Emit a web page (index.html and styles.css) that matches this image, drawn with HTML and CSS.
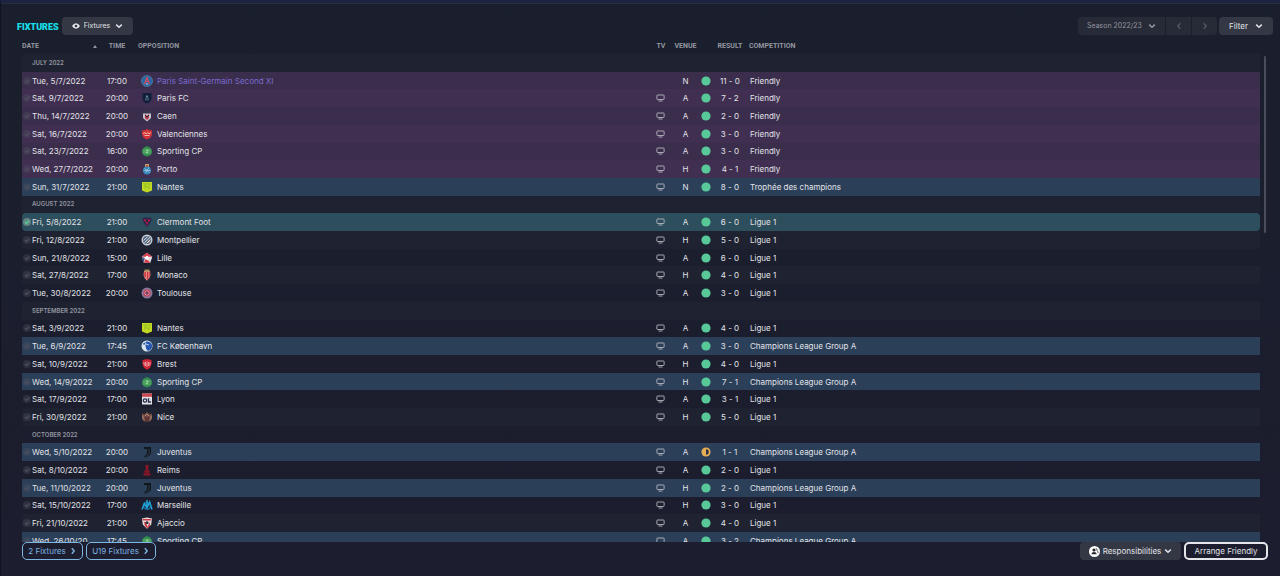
FILE: index.html
```html
<!DOCTYPE html>
<html lang="en">
<head>
    <meta charset="UTF-8">
    <title>Fixtures</title>
    <meta name="viewport" content="width=device-width, initial-scale=1.0">
    <link rel="stylesheet" href="styles.css">
</head>
<body>
    <!-- Icons and club crests -->
    <svg class="sprite" aria-hidden="true">
        <symbol id="chevron" viewBox="0 0 8 8"><path d="M1.2 2.6 4 5.2l2.8-2.6" fill="none" stroke="currentColor" stroke-width="1.5"/></symbol>
        <symbol id="left" viewBox="0 0 8 8"><path d="M5.2 1.2 2.8 4l2.4 2.8" fill="none" stroke="currentColor" stroke-width="1.4"/></symbol>
        <symbol id="right" viewBox="0 0 8 8"><path d="M2.8 1.2 5.2 4 2.8 6.8" fill="none" stroke="currentColor" stroke-width="1.4"/></symbol>
        <symbol id="eye" viewBox="0 0 8 8"><path d="M0 4Q1.6 1.2 4 1.2T8 4Q6.4 6.8 4 6.8T0 4z" fill="currentColor"/><circle cx="4" cy="4" r="1.3" fill="#343845"/></symbol>
        <symbol id="person" viewBox="0 0 11 11"><circle cx="5.5" cy="5.5" r="5.5" fill="#fff"/><circle cx="5" cy="4" r="1.6" fill="#25262f"/><path d="M2.3 8.2q.4-2.3 2.7-2.3t2.8 2.3z" fill="#25262f"/><path d="M6.8 2.5q1.7.1 1.3 2.1 1 .8 1 2.6" fill="none" stroke="#25262f" stroke-width=".8"/></symbol>
        <symbol id="check" viewBox="0 0 8 8"><circle cx="4" cy="4" r="4" fill="currentColor"/><path d="m2 4 1.5 1.5L6.2 2.7" fill="none" stroke="var(--tick)" stroke-width="1.1"/></symbol>
        <symbol id="tv" viewBox="0 0 9 8"><path d="M1.500 1h6q.6 0 .6.6v3.300q0 .6-.6.6h-6q-.6 0-.6-.6V1.600q0-.6.6-.6zM2.500 7h4" fill="none" stroke="currentColor" stroke-width=".9"/></symbol>
        <symbol id="win" viewBox="0 0 10 10"><circle cx="5" cy="5" r="4.600" fill="#58c898"/></symbol>
        <symbol id="draw" viewBox="0 0 10 10"><circle cx="5" cy="5" r="4.600" fill="#e5ae55"/><path d="M5 2.200a2.800 2.800 0 0 1 0 5.600z" fill="#2c3347"/></symbol>

        <symbol id="psg" viewBox="0 0 12 12"><circle cx="6" cy="6" r="5.500" fill="#2a68a0" stroke="#5c90b8" stroke-width=".6"/><path d="M6 2.200 3.600 9.200M6 2.200l2.400 7M4.200 6.500h3.600" stroke="#df4b61" stroke-width="1.100" fill="none"/><path d="M5 9h2" stroke="#d9dfec" stroke-width=".8"/></symbol>
        <symbol id="parisfc" viewBox="0 0 12 12"><path d="M1.500 1h9v5.500Q10 10 6 11.500 2 10 1.500 6.500z" fill="#10213d"/><path d="M4.500 3h3l.8 6H3.700zM6 5v4" fill="#6d86a4" stroke="#0b172d"/></symbol>
        <symbol id="caen" viewBox="0 0 12 12"><path d="M2 1h8v7l-4 3.500L2 8z" fill="#c9c2c9"/><path d="M2 1h8v2.500H2z" fill="#37364d"/><path d="m4 4 2 2 2-2v4L6 10 4 8z" fill="#b73448"/><path d="m4 5 2 2 2-2" fill="none" stroke="#29283a"/></symbol>
        <symbol id="valenciennes" viewBox="0 0 12 12"><path d="M1 2.500Q3.500 2.500 6 1q2.500 1.500 5 1.500V6q-.5 4-5 5.500Q1.500 10 1 6z" fill="#d53238"/><path d="m2 6 2-1.500L5 6l2-1.500L8 6l2-1.500M3.500 7.500h5" fill="none" stroke="#f1c4bb" stroke-width=".9"/></symbol>
        <symbol id="sporting" viewBox="0 0 12 12"><path d="M3 2.500 6 1l3 1.500L11 5v3l-2 2.500-3 1-3-1L1 8V5z" fill="#328c4d"/><path d="M3 3.500v6M9 3.500v6" stroke="#85b18b" stroke-width=".7"/><circle cx="6" cy="6.500" r="2.800" fill="#48a65a"/><path d="M4.800 5h2.500L5.200 7.800h2" fill="none" stroke="#bed7bd" stroke-width=".8"/></symbol>
        <symbol id="porto" viewBox="0 0 12 12"><path d="M4 1h4v3H4z" fill="#c3a46a"/><circle cx="6" cy="7.500" r="4" fill="#3185b9"/><path d="m3.500 5.500 5 4M8 4.500 4.500 10M2.500 7.500h7" stroke="#9fc7dc" stroke-width=".8"/><circle cx="6" cy="3" r="1" fill="#a53e45"/></symbol>
        <symbol id="nantes" viewBox="0 0 12 12"><path d="M1 1h10v8.500L6 11.500 1 9.500z" fill="#c3d821"/><path d="M4 8V4l4 4V4M2 3h8" fill="none" stroke="#8cbf28" stroke-width="1"/></symbol>
        <symbol id="clermont" viewBox="0 0 12 12"><path d="M1 2.500Q6 .5 11 2.500L8.500 8 6 11 3.500 8z" fill="#28254f"/><path d="M2 3.500h8L7 6.500 6 10 5 6.500z" fill="#b41f43"/><circle cx="6" cy="5" r="1.200" fill="#252345"/></symbol>
        <symbol id="montpellier" viewBox="0 0 12 12"><circle cx="6" cy="6" r="5.500" fill="#c7cdd4"/><circle cx="6" cy="6" r="4.100" fill="#536884"/><path d="m2.600 6.500 4.200-4M3.500 8.500 9 3.500M5.500 9.500l4-4" stroke="#dbe0e4" stroke-width="1"/><path d="m7 9 2-2" stroke="#c97655"/></symbol>
        <symbol id="lille" viewBox="0 0 12 12"><path d="m6 .8 5.300 4-2 6H2.700l-2-6z" fill="#e4dce3"/><path d="m6 .8 5.300 4H.7zM3 10.800 4.500 7 8 9l1.300 1.800z" fill="#d73a4a"/><path d="m.7 4.800 3 1.500-1 4.500z" fill="#374e80"/><path d="m4 5.500 2-2 2 2-1 2H5z" fill="#fff"/></symbol>
        <symbol id="monaco" viewBox="0 0 12 12"><path d="M3 2h6l.5 4Q9 9.500 6 11.700 3 9.500 2.500 6z" fill="#e08d89"/><path d="M3.500 3h1.300v6L3.200 7zM6 3h1.300v7L6 11zM8.300 3H9l.3 3.500-1 2z" fill="#cf3037"/><path d="M3.500.5h5L8.300 2.500H3.700z" fill="#a99157"/></symbol>
        <symbol id="toulouse" viewBox="0 0 12 12"><circle cx="6" cy="6" r="5.500" fill="#87799d"/><circle cx="6" cy="6" r="3.800" fill="#b93b55"/><path d="M6 2.500v7M2.500 6h7M3.700 3.700l4.600 4.600M8.300 3.700 3.700 8.300" stroke="#ddbdc8" stroke-width=".7"/><circle cx="6" cy="6" r="1.400" fill="#75405f"/></symbol>
        <symbol id="copenhagen" viewBox="0 0 12 12"><circle cx="6" cy="6" r="5.500" fill="#dce5ef"/><path d="M5 1.500q5-.5 6 3.500t-4 6Q4.500 9 4.500 6z" fill="#2757b0"/><path d="m1.500 4 3-2-1 3z" fill="#2757a0"/><path d="m5 4 3 1" stroke="#b7cee8"/></symbol>
        <symbol id="brest" viewBox="0 0 12 12"><path d="M1.500 2 6 1l4.500 1v4Q10 10 6 11.700 2 10 1.500 6z" fill="#d12335"/><path d="M3 4v2l1.500 2V4M6 3.500V9M9 4v2L7.500 8V4" fill="none" stroke="#f3b2b5" stroke-width=".8"/></symbol>
        <symbol id="lyon" viewBox="0 0 12 12"><path d="M1 .5h10v11H1z" fill="#e1e1e6"/><path d="M1 .5h10v3.300H1z" fill="#cb4850"/><circle cx="4" cy="7.500" r="1.700" fill="none" stroke="#29324c" stroke-width="1.300"/><path d="M7.500 5.200V9H10" fill="none" stroke="#29324c" stroke-width="1.400"/></symbol>
        <symbol id="nice" viewBox="0 0 12 12"><path d="m1 2 2 1.500L6 1l3 2.500L11 2v6l-2 2.500H3L1 8z" fill="#704a42"/><path d="M2 4.500v3L3.500 9M10 4.500v3L8.500 9M4 5l2-2 2 2" fill="none" stroke="#c4a185" stroke-width=".8"/><path d="M4.500 6h3v3.500h-3z" fill="#291f29"/><path d="M6 6v3.500" stroke="#b94243"/></symbol>
        <symbol id="juventus" viewBox="0 0 12 12"><path d="M3 1h7v5.500q0 3.500-6.500 5V9.800Q6 9 6 6.500V3H3z" fill="#11171f"/><path d="M8 3v4q0 2-2.500 3.300" fill="none" stroke="#46515f" stroke-width=".6"/></symbol>
        <symbol id="reims" viewBox="0 0 12 12"><path d="M4.500 1h3v2L7 4l1.500 3v2.500h1v2h-7v-2h1V7L5 4l-.5-1z" fill="#8d1727"/><path d="M4 6h4M3.500 9h5" stroke="#461526" stroke-width=".7"/></symbol>
        <symbol id="marseille" viewBox="0 0 12 12"><circle cx="6" cy="7" r="3.400" fill="none" stroke="#1774a8" stroke-width="1.200"/><path d="M1 10.500 3.300 4.500 6 9l2.700-6L11 10.500M6 1v6" fill="none" stroke="#22a4d8" stroke-width="1.500"/></symbol>
        <symbol id="ajaccio" viewBox="0 0 12 12"><path d="M1 1.500 6 .5l5 1-.8 6L6 11.700 1.800 7.500z" fill="#e5d9dc"/><path d="M1.800 2h8.400v1.500H1.800zM3 5l1 4 2 2V8L4.500 5zM9 5 7.500 8l-1.500 2v1.700L9 8.500z" fill="#cd3a43"/><path d="m4.500 5 1.500-1 1.500 1v2h-3z" fill="#3d3542"/></symbol>
    </svg>

    <main class="panel">
        <header class="toolbar">
            <h1 class="title">Fixtures</h1>
            <label class="picker view-picker">
                <svg class="icon"><use href="#eye"/></svg>
                <select aria-label="View"><option>Fixtures</option></select>
                <svg class="icon"><use href="#chevron"/></svg>
            </label>
            <div class="season">
                <label class="picker season-picker">
                    <select aria-label="Season"><option>Season 2022/23</option></select>
                    <svg class="icon"><use href="#chevron"/></svg>
                </label>
                <button class="step" aria-label="Previous season"><svg class="icon"><use href="#left"/></svg></button>
                <button class="step" aria-label="Next season"><svg class="icon"><use href="#right"/></svg></button>
            </div>
            <button class="btn filter">Filter <svg class="icon"><use href="#chevron"/></svg></button>
        </header>

        <div class="list">
            <div class="list-view">
                <table class="fixtures">
                    <colgroup>
                        <col class="col-date"><col class="col-time"><col class="col-team"><col class="col-tv"><col class="col-venue"><col class="col-dot"><col class="col-result"><col>
                    </colgroup>
                    <thead>
                        <tr>
                            <th class="date-head"><span>Date</span><i class="sort"></i></th>
                            <th class="center">Time</th>
                            <th class="team-head">Opposition</th>
                            <th class="center">TV</th>
                            <th class="center">Venue</th>
                            <th></th>
                            <th class="center">Result</th>
                            <th>Competition</th>
                        </tr>
                    </thead>
                    <tbody id="fixture-rows"></tbody>
                </table>
            </div>
            <div class="scroll-thumb"></div>
        </div>

        <footer class="actions">
            <button class="btn outline">2 Fixtures <svg class="icon"><use href="#right"/></svg></button>
            <button class="btn outline">U19 Fixtures <svg class="icon"><use href="#right"/></svg></button>
            <button class="btn responsibilities"><svg class="person"><use href="#person"/></svg> Responsibilities <svg class="icon"><use href="#chevron"/></svg></button>
            <button class="btn arrange">Arrange Friendly</button>
        </footer>
    </main>
    <script src="script.js"></script>
</body>
</html>
```
FILE: styles.css
```css
:root {
    --stripe: #1f2331;
    --friendly: #3b2d4c;
    --friendly-alt: #402f51;
    --cup: #2b3f59;
    --selected: #2d4e5c;
    --button: #343845;
    --text: #e2e3e8;
    --muted: #9396a0;
    --accent: #7fb5e2;
}
* {
    box-sizing: border-box;
}
body {
    margin: 0;
    background: linear-gradient(#1a1f2d, #1c1d2e);
    color: var(--text);
    font-family: Inter, "Liberation Sans", sans-serif;
    font-size: 8px;
    line-height: 12px;
}
.sprite {
    position: absolute;
    width: 0;
    height: 0;
}
.panel {
    display: flex;
    flex-direction: column;
    height: 100vh;
    padding: 14px 7px 16px 16px;
    border-top: 3px solid #1a2442;
    border-left: 1px solid #121321;
    box-shadow: inset 0 1px #2a2e3d;
}
.toolbar {
    display: flex;
    align-items: center;
    height: 18px;
    margin-bottom: 2px;
    flex: none;
}
.title {
    margin: 2px 3px 0 0;
    color: #16e0ee;
    font-family: Roboto, sans-serif;
    font-size: 9px;
    font-weight: 900;
    text-transform: uppercase;
}
button, select {
    margin: 0;
    padding: 0;
    border: none;
    background: none;
    color: inherit;
    font: inherit;
    cursor: pointer;
}
select {
    appearance: none;
    flex: 1;
    min-width: 0;
}
.icon {
    width: 8px;
    height: 8px;
    flex: none;
}
.picker {
    display: flex;
    align-items: center;
    height: 18px;
    font-size: 7px;
}
.view-picker {
    width: 71px;
    padding: 0 10px;
    gap: 4px;
    border-radius: 4px;
    background: var(--button);
}
.season {
    display: flex;
    gap: 1px;
    margin-left: auto;
    border-radius: 4px;
    overflow: hidden;
    color: var(--muted);
}
.season-picker {
    width: 87px;
    padding: 0 9px;
    background: #272a37;
}
.step {
    width: 25px;
    height: 18px;
    display: flex;
    align-items: center;
    justify-content: center;
    background: #272a37;
    color: #565965;
}
.btn {
    display: flex;
    align-items: center;
    justify-content: center;
    gap: 3px;
    height: 18px;
    border-radius: 4px;
    white-space: nowrap;
}
.filter {
    width: 54px;
    margin-left: 2px;
    gap: 7px;
    background: var(--button);
}

/* Fixture list */
.list {
    display: flex;
    flex: 1;
    min-height: 0;
    gap: 4px;
    padding: 0 7px 0 5px;
}
.list-view {
    flex: 1;
    overflow: hidden;
}
.scroll-thumb {
    width: 2px;
    height: 35%;
    margin-top: 19px;
    border-radius: 1px;
    background: #4b4e5a;
}
.fixtures {
    width: 100%;
    height: 513px;
    table-layout: fixed;
    border-collapse: collapse;
}
.fixtures th, .fixtures td {
    padding: 0;
    text-align: left;
    white-space: nowrap;
}
.fixtures th {
    height: 17px;
    color: var(--muted);
    font-family: Roboto, sans-serif;
    font-size: 7px;
    font-weight: 700;
    text-transform: uppercase;
}
.fixtures .center {
    text-align: center;
}
.fixtures .team-head {
    padding-left: 6px;
}
.col-date { width: 80px; }
.col-time { width: 30px; }
.col-team { width: 42%; }
.col-tv { width: 18px; }
.col-venue { width: 31px; }
.col-dot { width: 10px; }
.col-result { width: 38px; }
.sort {
    float: right;
    margin: 5px 5px 0 0;
    border: 2px solid transparent;
    border-top: none;
    border-bottom: 3px solid var(--muted);
}
.fixtures tbody tr:nth-child(odd) {
    background: var(--stripe);
}
.fixtures tbody tr.friendly {
    background: var(--friendly);
}
.fixtures tbody tr.friendly:nth-child(odd) {
    background: var(--friendly-alt);
}
.fixtures tbody tr.cup:nth-child(n) {
    background: var(--cup);
}
.fixtures tbody tr.selected:nth-child(n) {
    background: none;
}
.fixtures .selected td {
    background: var(--selected);
}
.selected td:first-child {
    border-radius: 4px 0 0 4px;
}
.selected td:last-child {
    border-radius: 0 4px 4px 0;
}
.fixtures .month {
    padding-left: 10px;
    color: var(--muted);
    font-size: 6px;
    font-weight: 600;
    text-transform: uppercase;
}
.cell {
    display: flex;
    align-items: center;
}
.check {
    --tick: #505260;
    width: 8px;
    height: 8px;
    margin: 0 1px;
    color: rgba(82, 84, 96, 0.35);
}
.selected .check {
    --tick: #4fd59a;
    color: #668481;
}
.crest {
    width: 12px;
    height: 12px;
    margin: 0 4px 0 9px;
}
.tv {
    display: block;
    width: 9px;
    height: 8px;
    margin: 0 auto;
    color: #b5b7c0;
}
.dot {
    display: block;
    width: 10px;
    height: 10px;
    margin: 0 auto;
}
.own-team {
    color: #7c6bd0;
}
.fixtures .comp {
    padding-left: 1px;
}

/* Bottom buttons */
.actions {
    display: flex;
    flex: none;
    gap: 3px;
    padding: 0 5px;
}
.outline {
    width: 61px;
    border: 1px solid var(--accent);
    color: var(--accent);
    border-radius: 5px;
}
.outline + .outline {
    width: 70px;
}
.responsibilities {
    width: 101px;
    margin-left: auto;
    background: var(--button);
}
.person {
    width: 11px;
    height: 11px;
}
.arrange {
    width: 84px;
    border: 2px solid #e5e6eb;
    border-radius: 5px;
}
```
FILE: script.js
```js
// date, time, crest, name, venue, result, competition
const months = [
    ["July 2022", [
        ["Tue, 5/7/2022", "17:00", "psg", "Paris Saint-Germain Second XI", "N", "11 - 0", "Friendly"],
        ["Sat, 9/7/2022", "20:00", "parisfc", "Paris FC", "A", "7 - 2", "Friendly"],
        ["Thu, 14/7/2022", "20:00", "caen", "Caen", "A", "2 - 0", "Friendly"],
        ["Sat, 16/7/2022", "20:00", "valenciennes", "Valenciennes", "A", "3 - 0", "Friendly"],
        ["Sat, 23/7/2022", "16:00", "sporting", "Sporting CP", "A", "3 - 0", "Friendly"],
        ["Wed, 27/7/2022", "20:00", "porto", "Porto", "H", "4 - 1", "Friendly"],
        ["Sun, 31/7/2022", "21:00", "nantes", "Nantes", "N", "8 - 0", "Trophée des champions"]
    ]],
    ["August 2022", [
        ["Fri, 5/8/2022", "21:00", "clermont", "Clermont Foot", "A", "6 - 0", "Ligue 1"],
        ["Fri, 12/8/2022", "21:00", "montpellier", "Montpellier", "H", "5 - 0", "Ligue 1"],
        ["Sun, 21/8/2022", "15:00", "lille", "Lille", "A", "6 - 0", "Ligue 1"],
        ["Sat, 27/8/2022", "17:00", "monaco", "Monaco", "H", "4 - 0", "Ligue 1"],
        ["Tue, 30/8/2022", "20:00", "toulouse", "Toulouse", "A", "3 - 0", "Ligue 1"]
    ]],
    ["September 2022", [
        ["Sat, 3/9/2022", "21:00", "nantes", "Nantes", "A", "4 - 0", "Ligue 1"],
        ["Tue, 6/9/2022", "17:45", "copenhagen", "FC København", "A", "3 - 0", "Champions League Group A"],
        ["Sat, 10/9/2022", "21:00", "brest", "Brest", "H", "4 - 0", "Ligue 1"],
        ["Wed, 14/9/2022", "20:00", "sporting", "Sporting CP", "H", "7 - 1", "Champions League Group A"],
        ["Sat, 17/9/2022", "17:00", "lyon", "Lyon", "A", "3 - 1", "Ligue 1"],
        ["Fri, 30/9/2022", "21:00", "nice", "Nice", "H", "5 - 0", "Ligue 1"]
    ]],
    ["October 2022", [
        ["Wed, 5/10/2022", "20:00", "juventus", "Juventus", "A", "1 - 1", "Champions League Group A"],
        ["Sat, 8/10/2022", "20:00", "reims", "Reims", "A", "2 - 0", "Ligue 1"],
        ["Tue, 11/10/2022", "20:00", "juventus", "Juventus", "H", "2 - 0", "Champions League Group A"],
        ["Sat, 15/10/2022", "17:00", "marseille", "Marseille", "H", "3 - 0", "Ligue 1"],
        ["Fri, 21/10/2022", "21:00", "ajaccio", "Ajaccio", "A", "4 - 0", "Ligue 1"],
        ["Wed, 26/10/20", "17:45", "sporting", "Sporting CP", "A", "3 - 2", "Champions League Group A"]
    ]]
];

function rowClass(date, competition) {
    if (date === "Fri, 5/8/2022") return "selected";
    if (competition === "Friendly") return "friendly";
    return competition === "Ligue 1" ? "" : "cup";
}

function fixtureRow([date, time, crest, name, venue, result, competition]) {
    const [home, away] = result.split(" - ");
    const own = crest === "psg";
    return `<tr class="${rowClass(date, competition)}">
        <td><div class="cell"><svg class="check"><use href="#check"/></svg>${date}</div></td>
        <td class="center">${time}</td>
        <td><div class="cell${own ? " own-team" : ""}"><svg class="crest"><use href="#${crest}"/></svg>${name}</div></td>
        <td>${own ? "" : '<svg class="tv"><use href="#tv"/></svg>'}</td>
        <td class="center">${venue}</td>
        <td><svg class="dot"><use href="#${home === away ? "draw" : "win"}"/></svg></td>
        <td class="center">${result}</td>
        <td class="comp">${competition}</td>
    </tr>`;
}

document.getElementById("fixture-rows").innerHTML = months.map(([month, fixtures]) =>
    `<tr><td class="month" colspan="8">${month}</td></tr>` + fixtures.map(fixtureRow).join("")
).join("");
```
